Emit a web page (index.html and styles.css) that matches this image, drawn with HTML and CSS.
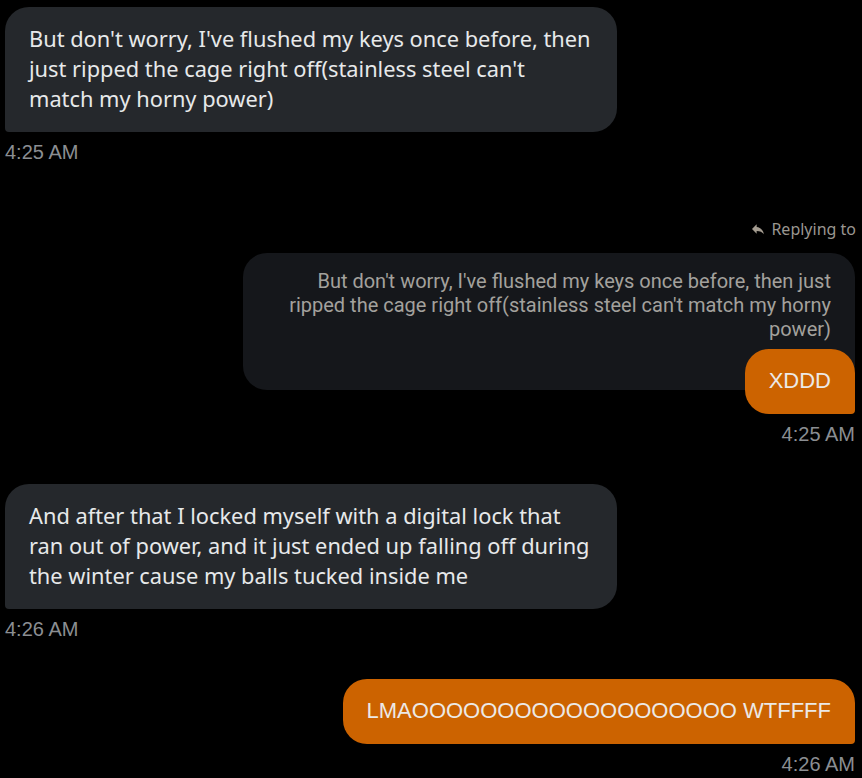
FILE: index.html
```html
<!DOCTYPE html>
<html>
<head>
<meta charset="utf-8">
<link rel="stylesheet" href="styles.css">
</head>
<body>
<div class="chat">
  <div class="msg in">
    <div class="bubble recv">But don't worry, I've flushed my keys once before, then just ripped the cage right off(stainless steel can't match my horny power)</div>
    <div class="time">4:25 AM</div>
  </div>

  <div class="msg out reply-msg">
    <div class="replying">
      <svg class="reply-icon" viewBox="0 0 24 24" width="16" height="16"><path d="M10 9V5l-7 7 7 7v-4.1c5 0 8.5 1.6 11 5.1-1-5-4-10-11-11z" fill="currentColor"/></svg>
      <span>Replying to</span>
    </div>
    <div class="quote">But don't worry, I've flushed my keys once before, then just ripped the cage right off(stainless steel can't match my horny power)</div>
    <div class="bubble sent overlap">XDDD</div>
    <div class="time">4:25 AM</div>
  </div>

  <div class="msg in">
    <div class="bubble recv">And after that I locked myself with a digital lock that ran out of power, and it just ended up falling off during the winter cause my balls tucked inside me</div>
    <div class="time">4:26 AM</div>
  </div>

  <div class="msg out">
    <div class="bubble sent">LMAOOOOOOOOOOOOOOOOOOO WTFFFF</div>
    <div class="time">4:26 AM</div>
  </div>
</div>
</body>
</html>
```

FILE: styles.css
```css
html, body {
  margin: 0;
  padding: 0;
  background: #000000;
}

.chat {
  display: flex;
  flex-direction: column;
  padding: 7px 7px 0 5px;
  gap: 38px;
}

.msg {
  display: flex;
  flex-direction: column;
}

.msg.in {
  align-items: flex-start;
}

.msg.out {
  align-items: flex-end;
}

.bubble {
  font-family: "Noto Sans", "Open Sans", sans-serif;
  font-size: 21.8px;
  line-height: 30px;
  color: #e7e9ea;
  border-radius: 24px;
}

.recv {
  background: #25282c;
  width: 564px;
  padding: 17px 24px 18px 24px;
  border-bottom-left-radius: 4px;
}

.sent {
  background: #cc6300;
  padding: 17px 24px 18px 24px;
  border-bottom-right-radius: 4px;
  font-family: "Liberation Sans", Arial, sans-serif;
  font-size: 22px;
  color: #ece9e6;
}

.time {
  font-family: "Liberation Sans", Arial, sans-serif;
  font-size: 20px;
  line-height: 23px;
  color: #8b8e92;
  margin-top: 9px;
}

.reply-msg {
  margin-top: 16px;
}

.replying {
  display: flex;
  align-items: center;
  gap: 5px;
  font-family: "Noto Sans", sans-serif;
  font-size: 16px;
  line-height: 22px;
  color: #9a9690;
  margin-right: -1px;
}

.reply-icon {
  color: #a49c90;
}

.quote {
  margin-top: 13px;
  width: 564px;
  background: #15171b;
  border-radius: 24px;
  padding: 16px 24px 49px 24px;
  text-align: right;
  font-family: "Roboto", sans-serif;
  font-size: 20px;
  line-height: 24px;
  color: #a3a19d;
}

.overlap {
  margin-top: -41px;
}
```
